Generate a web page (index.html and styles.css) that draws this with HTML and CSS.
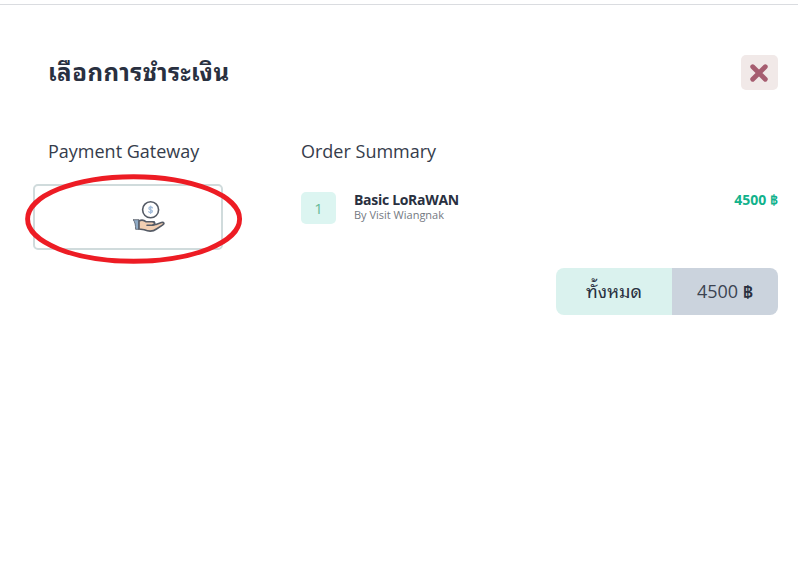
FILE: index.html
```html
<!DOCTYPE html>
<html lang="th">
<head>
<meta charset="utf-8">
<title>เลือกการชำระเงิน</title>
<link rel="stylesheet" href="styles.css">
</head>
<body>
<main class="checkout">
  <header class="head">
    <h1 class="title">เลือกการชำระเงิน</h1>
    <button class="close" aria-label="Close">
      <svg width="18" height="18" viewBox="0 0 18 18"><path d="M2.7 2.7 15.3 15.3M15.3 2.7 2.7 15.3"/></svg>
    </button>
  </header>
  <div class="columns">
    <section class="gateway">
      <h2 class="heading gateway-heading">Payment Gateway</h2>
      <div class="method">
        <svg class="hand" width="32" height="34" viewBox="0 0 32 34">
          <circle class="coin" cx="17.6" cy="9.8" r="8"/>
          <path class="dollar" d="M19.4 7.9C18.8 6.8 15.9 6.4 15.9 8.4S19.4 9.5 19.4 11.2 16.3 12.8 15.7 11.7M17.6 6.2V13.4"/>
          <path class="cuff" d="M.2 19.7H6V29.3H2.6C2.6 25.6 2.2 22 .2 19.7Z"/>
          <path class="palm" d="M6 21C8.5 19.5 11 20 13.3 21.8H20C22.2 21.8 22.3 24.6 20 24.7L23 24.5 28.4 22.6C30.8 21.8 31.8 23.6 29.8 24.8L23.5 29C19.5 32 15 31.3 11.3 29.8L6 29Z"/>
          <path class="finger" d="M14 25.2H20C22.3 25 22.2 21.8 20 21.8"/>
        </svg>
        <svg class="ring" width="218" height="90" viewBox="0 0 218 90"><ellipse cx="108.6" cy="45" rx="106" ry="42.3"/></svg>
      </div>
    </section>
    <section class="summary">
      <h2 class="heading">Order Summary</h2>
      <div class="item">
        <span class="count">1</span>
        <div class="details">
          <strong class="name">Basic LoRaWAN</strong>
          <span class="author">By Visit Wiangnak</span>
        </div>
        <strong class="price">4500 ฿</strong>
      </div>
      <div class="total">
        <span class="total-label">ทั้งหมด</span>
        <span class="total-value">4500 <b class="baht">฿</b></span>
      </div>
    </section>
  </div>
</main>
</body>
</html>
```
FILE: styles.css
```css
* { box-sizing: border-box; }
body {
  margin: 0;
  background: #fff;
  color: #293040;
  font-family: "Open Sans", "Noto Sans Thai Looped", Loma, Waree, Garuda, "Noto Sans Thai", "Noto Sans", sans-serif;
}
.checkout {
  margin-top: 4px;
  border-top: 1px solid #dadce0;
  padding: 50px 20px 0 33px;
}
.head {
  display: flex;
  justify-content: space-between;
  height: 35px;
  padding-left: 15px;
}
.title {
  margin: 0;
  font-size: 24px;
  line-height: 34px;
  font-weight: 700;
  letter-spacing: .5px;
  white-space: nowrap;
}
.close {
  display: flex;
  align-items: center;
  justify-content: center;
  width: 37px;
  height: 35px;
  padding: 0 1px 0 0;
  border: 0;
  border-radius: 5px;
  background: #f1e9e8;
}
.close path { stroke: #a65d70; stroke-width: 4.8; stroke-linecap: round; }
.columns {
  display: grid;
  grid-template-columns: 190px 477px;
  justify-content: space-between;
  padding-top: 47px;
}
.heading {
  margin: 0;
  color: #353c4b;
  font-size: 18px;
  line-height: 28px;
  font-weight: 400;
  white-space: nowrap;
}
.gateway-heading { padding-left: 15px; }
.method {
  position: relative;
  display: flex;
  height: 66px;
  margin-top: 19px;
  padding: 14px 0 0 98px;
  border: 2px solid #d0dbdc;
  border-radius: 5px;
}
.hand { fill: none; stroke: #555b66; stroke-width: 1.6; stroke-linejoin: round; stroke-linecap: round; }
.hand .dollar { stroke: #a3bddb; stroke-width: 1.3; }
.hand .cuff { fill: #8fabc6; stroke-width: .8; }
.hand .palm { fill: #f2cfb2; }
.ring { position: absolute; left: -10px; top: -12px; fill: none; stroke: #ed1c24; stroke-width: 4.9; }
.item {
  display: flex;
  height: 32px;
  margin-top: 27px;
}
.count {
  width: 35px;
  height: 32px;
  margin-right: 18px;
  border-radius: 5px;
  background: #dcf5f1;
  color: #65b996;
  font-size: 15px;
  line-height: 33px;
  text-align: center;
}
.details { display: flex; flex-direction: column; flex: 1; }
.name { font-size: 14px; line-height: 16px; letter-spacing: -.3px; }
.author { color: #747982; font-size: 11px; line-height: 14px; }
.price { color: #12b28c; font-size: 14px; line-height: 16px; }
.total {
  display: flex;
  width: 222px;
  height: 47px;
  margin: 44px 0 0 auto;
  border-radius: 8px;
  overflow: hidden;
  font-size: 18px;
  line-height: 47px;
  text-align: center;
  white-space: nowrap;
}
.total-label { width: 116px; background: #daf2ee; }
.total-value { flex: 1; background: #cbd3dd; color: #3c4351; }
.baht { color: #293040; font-weight: 600; }
```
